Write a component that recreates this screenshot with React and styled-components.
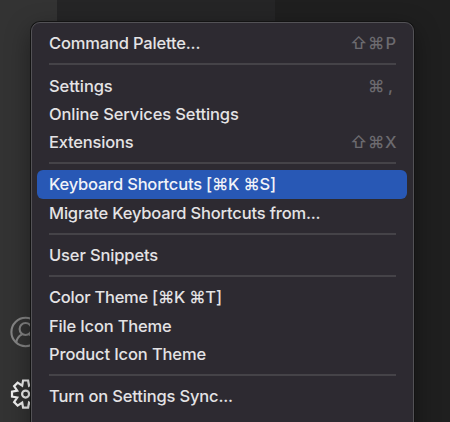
import React from "react";
import styled, { createGlobalStyle } from "styled-components";

const GlobalStyle = createGlobalStyle`
  * { box-sizing: border-box; }
  body { margin: 0; background: #1e1e1e; overflow: hidden; }
`;

const Window = styled.main`
  position: relative;
  display: flex;
  width: 450px;
  height: 422px;
  overflow: hidden;
  background: #1f1f1f;
  font-family: Inter, "Liberation Sans", "DejaVu Sans", sans-serif;
`;

const ActivityBar = styled.nav`
  width: 57px;
  flex: none;
  display: flex;
  flex-direction: column;
  justify-content: flex-end;
  gap: 28px;
  padding: 0 0 11px 8px;
  background: #333333;
`;

const ActivityIcon = styled.span`
  display: flex;
  color: ${(p) => (p.$active ? "#f2f2f2" : "#858585")};
  svg { width: 34px; height: 34px; }
`;

const SideBar = styled.aside`
  width: 218px;
  flex: none;
  background: #252526;
`;

const Menu = styled.div`
  position: absolute;
  left: 31px;
  top: 22px;
  width: 383px;
  height: 440px;
  padding: 6px 6px 6px 5px;
  border: 1px solid #535256;
  border-radius: 9px;
  background: #2d2a31;
  box-shadow: 0 0 0 1px #131313, 0 8px 26px rgba(0, 0, 0, 0.42);
`;

const Item = styled.div`
  height: 28.28px;
  display: flex;
  align-items: center;
  justify-content: space-between;
  padding: 0 11px 0 12px;
  border-radius: 6px;
  background: ${(p) => (p.$selected ? "#2858b5" : "transparent")};
  color: ${(p) => (p.$selected ? "#f1f3f8" : "#e4e3e5")};
  font-size: 16.5px;
  font-weight: 450;
  line-height: 28px;
  white-space: pre;
`;

const Label = styled.span`
  letter-spacing: ${(p) => p.$spacing}px;
`;

const Keys = styled.span`
  display: flex;
  color: #6c6a6f;
`;

const Key = styled.span`
  width: ${(p) => p.$width || 17}px;
  text-align: ${(p) => p.$align || "left"};
`;

const Separator = styled.div`
  height: 14.14px;
  padding: 6px 11px 0 12px;
  &::after {
    content: "";
    display: block;
    height: 2px;
    background: #454348;
  }
`;

function AccountIcon() {
  return (
    <svg viewBox="0 0 34 34" fill="none" stroke="currentColor" strokeWidth="2.1">
      <circle cx="17.6" cy="17" r="14.2" />
      <circle cx="17.6" cy="14" r="6" />
      <path d="M8.2 27.5C8.8 23.5 11 20.9 14 19.4M27 27.5C26.4 23.5 24.2 20.9 21.2 19.4" />
    </svg>
  );
}

function GearIcon() {
  return (
    <svg viewBox="0 0 34 34" fill="none" stroke="currentColor" strokeWidth="2.2">
      <path d="M15.1 3.5h5l.9 5.2 4.6-3.1 3.5 3.5-3.1 4.6 5.2.9v5l-5.2.9 3.1 4.6-3.5 3.5-4.6-3.1-.9 5.2h-5l-.9-5.2-4.6 3.1-3.5-3.5 3.1-4.6-5.2-.9v-5l5.2-.9-3.1-4.6 3.5-3.5 4.6 3.1z" />
      <circle cx="17.6" cy="17.1" r="3.5" />
    </svg>
  );
}

export default function App() {
  return (
    <>
      <GlobalStyle />
      <Window>
        <ActivityBar>
          <ActivityIcon><AccountIcon /></ActivityIcon>
          <ActivityIcon $active><GearIcon /></ActivityIcon>
        </ActivityBar>
        <SideBar />
        <Menu>
          <Item>
            <Label $spacing={-0.17}>Command Palette...</Label>
            <Keys><Key $width={18}>⇧</Key><Key>⌘</Key><Key $width={11} $align="right">P</Key></Keys>
          </Item>
          <Separator />
          <Item>
            <Label $spacing={-0.08}>Settings</Label>
            <Keys><Key>⌘</Key><Key $width={11} $align="center">,</Key></Keys>
          </Item>
          <Item><Label $spacing={-0.11}>Online Services Settings</Label></Item>
          <Item>
            <Label $spacing={-0.2}>Extensions</Label>
            <Keys><Key $width={18}>⇧</Key><Key>⌘</Key><Key $width={11} $align="right">X</Key></Keys>
          </Item>
          <Separator />
          <Item $selected><Label $spacing={-0.2}>Keyboard Shortcuts [⌘K ⌘S]</Label></Item>
          <Item><Label $spacing={-0.18}>Migrate Keyboard Shortcuts from...</Label></Item>
          <Separator />
          <Item><Label $spacing={-0.13}>User Snippets</Label></Item>
          <Separator />
          <Item><Label $spacing={-0.25}>Color Theme [⌘K ⌘T]</Label></Item>
          <Item><Label $spacing={-0.18}>File Icon Theme</Label></Item>
          <Item><Label $spacing={-0.13}>Product Icon Theme</Label></Item>
          <Separator />
          <Item><Label $spacing={-0.17}>Turn on Settings Sync...</Label></Item>
        </Menu>
      </Window>
    </>
  );
}
